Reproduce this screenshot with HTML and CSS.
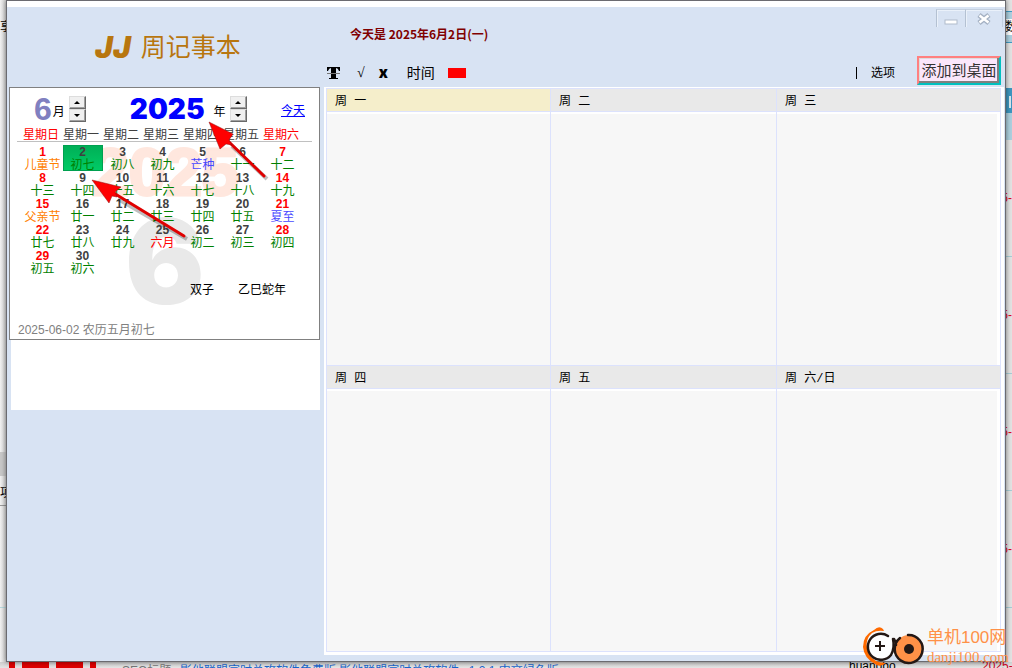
FILE: index.html
```html
<!DOCTYPE html>
<html lang="zh-CN">
<head>
    <meta charset="utf-8">
    <title>JJ 周记事本</title>
    <meta name="viewport" content="width=device-width, initial-scale=1.0">
    <link rel="stylesheet" href="styles.css">
</head>
<body>
    <!-- things on the desktop behind the window -->
    <div class="desktop" aria-hidden="true">
        <div class="behind-left">
            <span class="frag frag-share">共享</span>
            <span class="frag frag-item">项</span>
        </div>
        <div class="behind-right">
            <span class="frag frag-num">数</span>
            <div class="behind-head"></div>
            <div class="behind-sub"></div>
            <div class="behind-row"><span>2025-</span></div>
            <div class="behind-row"><span>2025-</span></div>
            <div class="behind-row"><span>2025-</span></div>
            <div class="behind-row"><span>2025-</span></div>
        </div>
        <div class="behind-bottom">
            <div class="red-logo"><i></i><i></i><i></i><i></i></div>
            <span class="seo">SEO标题:</span>
            <span class="seo-link">影他联盟官时总攻软件免费版 影他联盟官时总攻软件 v1.2.1 中文绿色版</span>
            <span class="user">huangbo</span>
            <span class="date">2025-</span>
        </div>
    </div>

    <div class="window">
        <aside class="side">
            <h1 class="logo"><span class="logo-jj">JJ</span>周记事本</h1>

            <div class="calendar">
                <div class="watermark watermark-year">2025</div>
                <div class="watermark watermark-month">6</div>

                <div class="cal-head">
                    <span class="month">6</span>
                    <span class="unit">月</span>
                    <div class="spin">
                        <button type="button" aria-label="下个月"><i class="up"></i></button>
                        <button type="button" aria-label="上个月"><i class="down"></i></button>
                    </div>
                    <span class="year">2025</span>
                    <span class="unit">年</span>
                    <div class="spin">
                        <button type="button" aria-label="下一年"><i class="up"></i></button>
                        <button type="button" aria-label="上一年"><i class="down"></i></button>
                    </div>
                    <a class="today-link" href="#">今天</a>
                </div>

                <div class="cal-body">
                    <table>
                        <thead>
                            <tr><th class="red">星期日</th><th>星期一</th><th>星期二</th><th>星期三</th><th>星期四</th><th>星期五</th><th class="red">星期六</th></tr>
                        </thead>
                        <tbody>
                            <tr>
                                <td class="rest"><b>1</b><span class="feast">儿童节</span></td>
                                <td class="selected"><b>2</b><span>初七</span></td>
                                <td><b>3</b><span>初八</span></td>
                                <td><b>4</b><span>初九</span></td>
                                <td><b>5</b><span class="term">芒种</span></td>
                                <td><b>6</b><span>十一</span></td>
                                <td class="rest"><b>7</b><span>十二</span></td>
                            </tr>
                            <tr>
                                <td class="rest"><b>8</b><span>十三</span></td>
                                <td><b>9</b><span>十四</span></td>
                                <td><b>10</b><span>十五</span></td>
                                <td><b>11</b><span>十六</span></td>
                                <td><b>12</b><span>十七</span></td>
                                <td><b>13</b><span>十八</span></td>
                                <td class="rest"><b>14</b><span>十九</span></td>
                            </tr>
                            <tr>
                                <td class="rest"><b>15</b><span class="feast">父亲节</span></td>
                                <td><b>16</b><span>廿一</span></td>
                                <td><b>17</b><span>廿二</span></td>
                                <td><b>18</b><span>廿三</span></td>
                                <td><b>19</b><span>廿四</span></td>
                                <td><b>20</b><span>廿五</span></td>
                                <td class="rest"><b>21</b><span class="term">夏至</span></td>
                            </tr>
                            <tr>
                                <td class="rest"><b>22</b><span>廿七</span></td>
                                <td><b>23</b><span>廿八</span></td>
                                <td><b>24</b><span>廿九</span></td>
                                <td><b>25</b><span class="red">六月</span></td>
                                <td><b>26</b><span>初二</span></td>
                                <td><b>27</b><span>初三</span></td>
                                <td class="rest"><b>28</b><span>初四</span></td>
                            </tr>
                            <tr>
                                <td class="rest"><b>29</b><span>初五</span></td>
                                <td><b>30</b><span>初六</span></td>
                                <td></td><td></td><td></td><td></td><td></td>
                            </tr>
                        </tbody>
                    </table>
                </div>

                <div class="signs"><span>双子</span><span>乙巳蛇年</span></div>
                <div class="lunar-date">2025-06-02 农历五月初七</div>

                <!-- red arrows pointing at the year and the day -->
                <svg class="arrows" width="309" height="251" viewBox="10 88 309 251">
                    <g class="arrow-shadow">
                        <path d="M267 179 L232 146"/>
                        <path d="M187 239 L118 199"/>
                    </g>
                    <g class="arrow-line">
                        <path d="M264 176 L228 141"/>
                        <path d="M184 236 L112 192"/>
                    </g>
                    <path class="arrow-tip" d="M209 122 L233 134 L229 140 L232 145 L226 144 L220 149 Z"/>
                    <path class="arrow-tip" d="M92 180 L121 187 L115 192 L117 197 L112 196 L109 203 Z"/>
                </svg>
            </div>

            <div class="note-blank"></div>
        </aside>

        <main class="main">
            <div class="top">
                <p class="today">今天是 2025年6月2日(一)</p>
                <div class="win-buttons">
                    <button type="button" aria-label="最小化">
                        <svg width="14" height="6" viewBox="0 0 14 6"><rect x="1" y="1" width="12" height="4" fill="#fff" stroke="#b0bccb"/></svg>
                    </button>
                    <button type="button" class="close" aria-label="关闭">
                        <svg width="16" height="14" viewBox="0 0 16 14">
                            <path d="M3 3 L13 11 M13 3 L3 11" stroke="#a3b0c2" stroke-width="5"/>
                            <path d="M3.500 3.400 L12.500 10.600 M12.500 3.400 L3.500 10.600" stroke="#fff" stroke-width="2.500"/>
                        </svg>
                    </button>
                </div>
            </div>

            <div class="toolbar">
                <button type="button" class="tool tool-strike" aria-label="删除线">
                    <svg width="15" height="14" viewBox="0 0 15 14">
                        <path d="M1 1 H14 V5 H13 Q12 2 10 2 V12 H12 V13 H3 V12 H5 V2 Q3 2 2 5 H1 Z" fill="#000"/>
                        <path d="M1 7.500 H14" stroke="#777"/>
                    </svg>
                </button>
                <button type="button" class="tool tool-check">√</button>
                <button type="button" class="tool tool-x">x</button>
                <button type="button" class="tool tool-time">时间</button>
                <button type="button" class="tool tool-color" aria-label="颜色"></button>
                <span class="divider"></span>
                <button type="button" class="tool tool-option">选项</button>
                <button type="button" class="add-desktop">添加到桌面</button>
            </div>

            <div class="week">
                <section class="day current"><label for="d1">周 一</label><textarea id="d1"></textarea></section>
                <section class="day"><label for="d2">周 二</label><textarea id="d2"></textarea></section>
                <section class="day"><label for="d3">周 三</label><textarea id="d3"></textarea></section>
                <section class="day"><label for="d4">周 四</label><textarea id="d4"></textarea></section>
                <section class="day"><label for="d5">周 五</label><textarea id="d5"></textarea></section>
                <section class="day"><label for="d6">周 六/日</label><textarea id="d6"></textarea></section>
            </div>
        </main>
    </div>

    <div class="site-mark">
        <svg width="64" height="42" viewBox="0 0 64 42">
            <path d="M21 3 Q17 -1 12 4 Q1 9 1 21 Q2 32 13 38 Q18 42 24 37 Q12 37 7 28 Q1 15 10 7 Q15 4 22 5 Z" fill="#ff6a00"/>
            <path d="M26 10 A13 13 0 1 0 29 29 Q33 22 31 13" fill="#fff" stroke="#231815" stroke-width="2.500" stroke-linecap="round"/>
            <path d="M18 15 V25 M13 20 H23" stroke="#231815" stroke-width="2"/>
            <circle cx="47" cy="23" r="14" fill="#ff9147"/>
            <path d="M38 12 A14 14 0 1 0 46 9 M32 13 Q34 16 34 19" fill="none" stroke="#231815" stroke-width="2.500" stroke-linecap="round"/>
            <circle cx="47" cy="23" r="5" fill="#231815"/>
        </svg>
        <div class="site-text">
            <div class="site-name">单机100网</div>
            <div class="site-url">danji100.com</div>
        </div>
    </div>
</body>
</html>
```

FILE: styles.css
```css
* {
    box-sizing: border-box;
}

body {
    margin: 0;
    height: 100vh;
    overflow: hidden;
    background-color: #ebebeb;
    font-family: "Liberation Sans", "Noto Sans CJK SC", sans-serif;
    font-size: 12px;
    color: #000;
}

button {
    margin: 0;
    padding: 0;
    border: none;
    background: none;
    font: inherit;
    color: inherit;
}

/* desktop */
.desktop {
    position: absolute;
    inset: 0;
    overflow: hidden;
}
.behind-left {
    position: absolute;
    left: 0;
    top: 0;
    bottom: 0;
    width: 6px;
    overflow: hidden;
    background: linear-gradient(#c8c8c8, #c8c8c8) 0 452px / 6px 24px no-repeat,
                linear-gradient(#999, #999) 0 505px / 6px 1px no-repeat,
                linear-gradient(#b7d9de, #b7d9de) 0 607px / 6px 1px no-repeat,
                linear-gradient(to right, #f2f2f2, #d4d4d4);
}
.frag {
    position: absolute;
    line-height: 16px;
    white-space: nowrap;
}
.frag-share {
    right: -6px;
    top: 19px;
}
.frag-item {
    left: 0;
    top: 485px;
}
.behind-right {
    position: absolute;
    right: 0;
    top: 0;
    bottom: 0;
    width: 6px;
    overflow: hidden;
    padding-top: 88px;
    background: linear-gradient(#409bc4, #409bc4) 0 11px / 6px 1px no-repeat,
                linear-gradient(#add0df, #add0df) 0 12px / 6px 30px no-repeat,
                linear-gradient(#409bc4, #409bc4) 0 42px / 6px 1px no-repeat,
                #e3e3e3;
}
.frag-num {
    left: -1px;
    top: 19px;
    background-color: #fff;
}
.behind-head {
    height: 25px;
    background: linear-gradient(#d8e8f0, #d8e8f0) 3px 8px / 2px 12px no-repeat, #3d96c0;
}
.behind-sub {
    height: 27px;
    background-color: #add0df;
}
.behind-row {
    display: flex;
    justify-content: flex-end;
    align-items: center;
    height: 117px;
    border-bottom: 1px solid #a8cdd6;
    color: #e00020;
}
.behind-bottom {
    position: absolute;
    left: 0;
    right: 0;
    bottom: 0;
    height: 6px;
    overflow: hidden;
    background: linear-gradient(#cfcfcf, #e6e6e6);
    line-height: 12px;
}
.behind-bottom span {
    position: absolute;
    top: 3px;
    white-space: nowrap;
}
.red-logo {
    display: flex;
    gap: 7px;
    padding-left: 9px;
}
.red-logo i {
    width: 6px;
    height: 7px;
    background-color: #e00000;
}
.red-logo i:nth-child(2), .red-logo i:nth-child(3) {
    width: 27px;
}
.behind-bottom .seo {
    left: 122px;
    color: #777;
}
.behind-bottom .seo-link {
    left: 180px;
    color: #1a66cc;
}
.behind-bottom .user {
    left: 849px;
    top: -2px;
}
.behind-bottom .date {
    left: 982px;
    top: -2px;
    color: #d00020;
}

/* window */
.window {
    position: relative;
    display: flex;
    gap: 4px;
    height: calc(100vh - 6px);
    margin: 0 6px;
    padding: 6px 1px 6px 2px;
    border: 1px solid #6b6b70;
    background: linear-gradient(#fff, #fff) 0 0 / 100% 6px no-repeat, #d8e3f3;
    box-shadow: 0 0 5px rgba(0, 0, 0, 0.5);
}

.side {
    width: 311px;
    flex-shrink: 0;
}
.logo {
    display: flex;
    align-items: center;
    gap: 10px;
    height: 80px;
    margin: 0;
    padding-left: 86px;
    font-size: 25px;
    font-weight: 400;
    line-height: 32px;
    color: #b8760f;
}
.logo-jj {
    font-family: Inter, sans-serif;
    font-size: 30px;
    font-style: italic;
    font-weight: 900;
}

.calendar {
    position: relative;
    height: 253px;
    border: 1px solid #808080;
    background-color: #fff;
}
.watermark {
    position: absolute;
    font-weight: bold;
}
.watermark-year {
    left: 82px;
    top: 51px;
    font-size: 66px;
    line-height: 66px;
    color: #ffe7de;
    -webkit-text-stroke: 3px #ffe7de;
}
.watermark-month {
    left: 115px;
    top: 113px;
    font-family: Inter, sans-serif;
    font-size: 118px;
    font-weight: 900;
    line-height: 120px;
    color: #e9e9e9;
}
.cal-head {
    position: relative;
    display: flex;
    align-items: center;
    height: 39px;
    padding: 3px 14px 0 24px;
}
.month {
    font-size: 32px;
    font-weight: bold;
    line-height: 32px;
    color: #8080c0;
}
.unit {
    padding: 6px 4px 0 1px;
    line-height: 16px;
}
.spin {
    display: flex;
    flex-direction: column;
}
.spin button {
    display: flex;
    justify-content: center;
    align-items: center;
    width: 17px;
    height: 13px;
    border: 1px solid;
    border-color: #ddd #696969 #696969 #ddd;
    background-color: #f0f0f0;
    box-shadow: inset -1px -1px #a0a0a0;
}
.up, .down {
    border: 3px solid transparent;
}
.up {
    border-top: none;
    border-bottom-color: #000;
}
.down {
    border-bottom: none;
    border-top-color: #000;
}
.year {
    margin-left: 44px;
    margin-right: 8px;
    font-family: Inter, sans-serif;
    font-size: 28px;
    font-weight: 900;
    line-height: 28px;
    color: #00f;
}
.today-link {
    margin-left: auto;
    padding-top: 4px;
    line-height: 16px;
    color: #00f;
}

.cal-body {
    position: relative;
    padding-left: 13px;
    background: linear-gradient(#c0c0c0, #c0c0c0) 7px 14px / 295px 1px no-repeat;
}
.cal-body table {
    width: 280px;
    border-collapse: collapse;
    table-layout: fixed;
}
.cal-body th {
    height: 18px;
    padding: 0 0 2px;
    font-weight: normal;
    text-align: left;
    line-height: 16px;
    color: #404040;
}
.cal-body td {
    height: 26px;
    padding: 1px 1px 0 0;
    text-align: center;
    vertical-align: top;
    white-space: nowrap;
}
.cal-body td b {
    display: block;
    line-height: 13px;
    color: #404040;
}
.cal-body td span {
    display: block;
    line-height: 12px;
    color: #008000;
}
.cal-body td.rest b,
.cal-body th.red,
.cal-body td span.red {
    color: #f00;
}
.cal-body td span.feast {
    color: #ff8000;
}
.cal-body td span.term {
    color: #4848ff;
}
.cal-body td.selected {
    background: linear-gradient(#00ae56, #00cc66);
    box-shadow: inset 0 0 0 1px #00a050;
}
.signs {
    position: relative;
    display: flex;
    gap: 24px;
    padding: 7px 0 0 180px;
    line-height: 16px;
}
.lunar-date {
    padding: 24px 0 0 8px;
    line-height: 16px;
    color: #808080;
}
.arrows {
    position: absolute;
    left: 0;
    top: 0;
}
.arrow-shadow path {
    stroke: #000;
    stroke-opacity: 0.25;
    stroke-width: 4;
}
.arrow-line path {
    stroke: #e00000;
    stroke-width: 3;
    stroke-linecap: round;
}
.arrow-tip {
    fill: #f00;
    stroke: #8c1010;
    stroke-width: 0.5;
}
.note-blank {
    height: 70px;
    margin-left: 2px;
    background-color: #fff;
}

/* right part */
.main {
    display: flex;
    flex-direction: column;
    flex: 1;
    min-width: 0;
}
.top {
    display: flex;
    justify-content: space-between;
    height: 48px;
}
.today {
    margin: 0;
    padding: 18px 0 0 26px;
    font-family: "Noto Sans CJK SC", sans-serif;
    font-weight: bold;
    line-height: 18px;
    color: #800000;
}
.win-buttons {
    display: flex;
    padding: 2px 1px 0 0;
}
.win-buttons button {
    display: flex;
    justify-content: center;
    align-items: center;
    width: 29px;
    height: 18px;
    border-top: 1px solid #c3cfdf;
    border-left: 1px solid #b4c1d2;
    box-shadow: inset 1px 1px #eaf1fa;
}
.win-buttons .close {
    width: 38px;
    border-right: 1px solid #c3cfdf;
}
.win-buttons button:first-child {
    padding-top: 6px;
}

.toolbar {
    display: flex;
    align-items: center;
    height: 32px;
    padding: 4px 3px 0 2px;
    line-height: 18px;
}
.tool-strike {
    display: flex;
}
.tool-check {
    margin-left: 16px;
    font-family: "Liberation Serif", serif;
    font-size: 14px;
}
.tool-x {
    margin-left: 14px;
    font-size: 15px;
    font-weight: 900;
    font-family: Inter, sans-serif;
}
.tool-time {
    margin-left: 19px;
    font-size: 14px;
}
.tool-color {
    width: 18px;
    height: 10px;
    margin-left: 13px;
    background-color: #f00;
}
.divider {
    width: 1px;
    height: 12px;
    margin-left: auto;
    background-color: #000;
}
.tool-option {
    margin: 0 22px 0 14px;
}
/* taller than the rest of the bar */
.add-desktop {
    align-self: flex-end;
    width: 84px;
    height: 29px;
    margin-bottom: 2px;
    border: 2px solid;
    border-color: #ff8080 #00c0c0 #00c0c0 #ff8080;
    background-color: #fbe6fb;
    box-shadow: inset -2px -2px #808080, inset 1px 1px #ddd;
    font-size: 15px;
    color: #333;
    white-space: nowrap;
}

.week {
    display: grid;
    grid-template-columns: 224fr 226fr 225fr;
    grid-template-rows: 277fr 287fr;
    flex: 1;
    padding: 1px 2px 3px;
    border-right: 1px solid #fff;
    background-color: #fff;
}
.day {
    display: flex;
    flex-direction: column;
    border-left: 1px solid #dce2fd;
}
.day:nth-child(3n) {
    border-right: 1px solid #dce2fd;
}
.day:nth-child(n + 4) {
    border-bottom: 1px solid #dce2fd;
}
.day label {
    height: 24px;
    padding: 3px 0 0 8px;
    border-top: 1px solid #dce2fd;
    border-bottom: 1px solid #dce2fd;
    background-color: #e9e9e9;
    font-family: "Liberation Mono", "Noto Sans CJK SC", monospace;
    line-height: 20px;
}
.day.current label {
    background-color: #f5eecb;
}
.day textarea {
    flex: 1;
    width: 100%;
    min-height: 0;
    margin: 0;
    padding: 4px 8px;
    border: none;
    border-top: 2px solid #fff;
    background-color: #f7f7f7;
    font: inherit;
    resize: none;
    outline: none;
}
.day:nth-child(3n) textarea {
    border-right: 3px solid #fff;
}

/* site mark over the corner */
.site-mark {
    position: absolute;
    right: 3px;
    bottom: 0;
    display: flex;
    gap: 1px;
    color: #ff9147;
}
.site-name {
    font-size: 17px;
    font-weight: 400;
    line-height: 24px;
}
.site-url {
    font-family: "Liberation Serif", serif;
    font-size: 15px;
    line-height: 14px;
}
```
